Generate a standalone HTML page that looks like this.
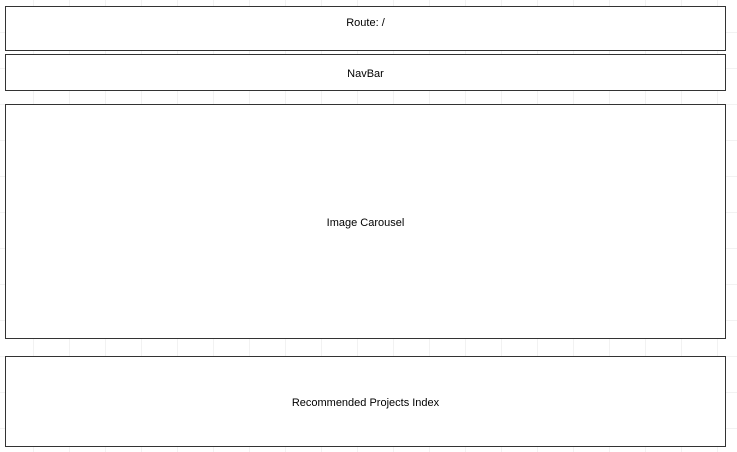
<!DOCTYPE html>
<html><head><style>
html,body{margin:0;padding:0}
body{width:737px;height:452px;position:relative;overflow:hidden;background-color:#fff;
background-image:linear-gradient(to right,#f2f2f2 1px,transparent 1px),linear-gradient(to bottom,#f2f2f2 1px,transparent 1px);
background-size:36px 36px;background-position:33px 32px;font-family:"Liberation Sans",sans-serif;}
.b{position:absolute;left:5px;border:1.5px solid #333;background:#fff;box-sizing:border-box;width:721px;
display:flex;align-items:center;justify-content:center;font-size:11px;color:#000;padding-top:2px}
</style></head><body>
<div class="b" style="top:6px;height:45px;align-items:flex-start;padding-top:10px">Route: /</div>
<div class="b" style="top:54px;height:37px">NavBar</div>
<div class="b" style="top:104px;height:235px">Image Carousel</div>
<div class="b" style="top:356px;height:91px">Recommended Projects Index</div>
</body></html>
